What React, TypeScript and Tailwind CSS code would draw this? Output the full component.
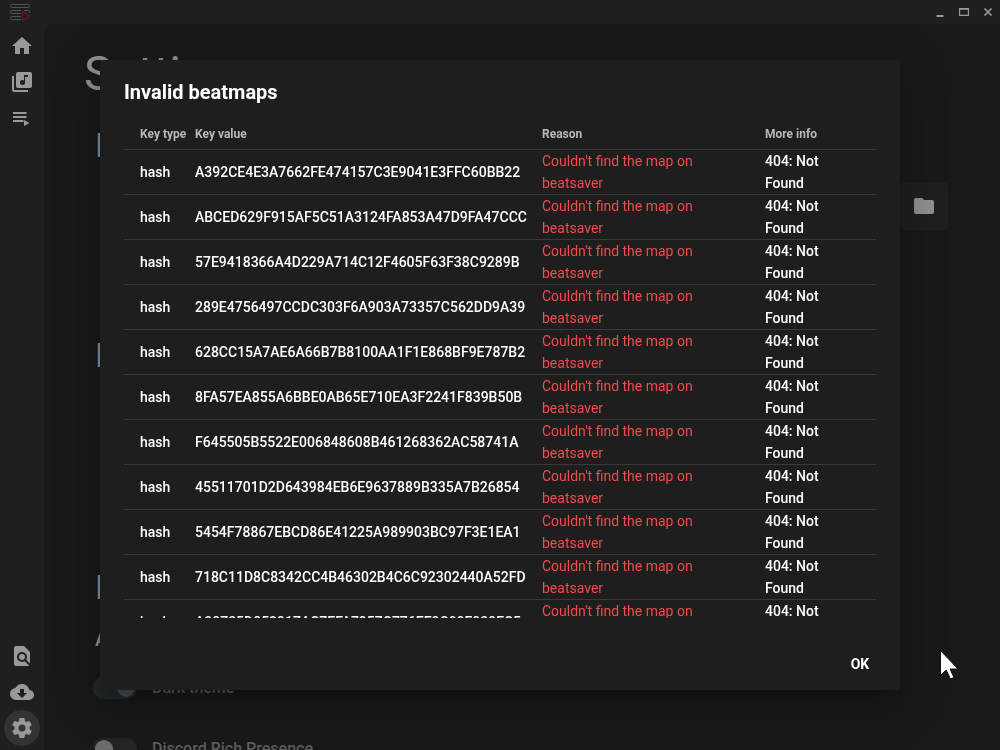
import type { ReactNode } from "react";

const COG =
  "M12,15.5A3.5,3.5 0 0,1 8.5,12A3.5,3.5 0 0,1 12,8.5A3.5,3.5 0 0,1 15.5,12A3.5,3.5 0 0,1 12,15.5M19.43,12.97C19.47,12.65 19.5,12.33 19.5,12C19.5,11.67 19.47,11.34 19.43,11L21.54,9.37C21.73,9.22 21.78,8.95 21.66,8.73L19.66,5.27C19.54,5.05 19.27,4.96 19.05,5.05L16.56,6.05C16.04,5.66 15.5,5.32 14.87,5.07L14.5,2.42C14.46,2.18 14.25,2 14,2H10C9.75,2 9.54,2.18 9.5,2.42L9.13,5.07C8.5,5.32 7.96,5.66 7.44,6.05L4.95,5.05C4.73,4.96 4.46,5.05 4.34,5.27L2.34,8.73C2.21,8.95 2.27,9.22 2.46,9.37L4.57,11C4.53,11.34 4.5,11.67 4.5,12C4.5,12.33 4.53,12.65 4.57,12.97L2.46,14.63C2.27,14.78 2.21,15.05 2.34,15.27L4.34,18.73C4.46,18.95 4.73,19.03 4.95,18.95L7.44,17.94C7.96,18.34 8.5,18.68 9.13,18.93L9.5,21.58C9.54,21.82 9.75,22 10,22H14C14.25,22 14.46,21.82 14.5,21.58L14.87,18.93C15.5,18.67 16.04,18.34 16.56,17.94L19.05,18.95C19.27,19.03 19.54,18.95 19.66,18.73L21.66,15.27C21.78,15.05 21.73,14.78 21.54,14.63L19.43,12.97Z";
const HOME = "M10,20V14H14V20H19V12H22L12,3L2,12H5V20H10Z";
const LIBRARY =
  "M4,6H2V20A2,2 0 0,0 4,22H18V20H4V6M20,2H8A2,2 0 0,0 6,4V16A2,2 0 0,0 8,18H20A2,2 0 0,0 22,16V4A2,2 0 0,0 20,2M18,7H15V12.5A2.5,2.5 0 0,1 12.5,15A2.5,2.5 0 0,1 10,12.5A2.5,2.5 0 0,1 12.5,10C13.07,10 13.58,10.19 14,10.5V5H18V7Z";
const PLAYLIST = "M3,6H16.5V8H3V6M3,10H16.5V12H3V10M3,14H13.5V16H3V14M14,14L19.5,17L14,20Z";
const FILE_FIND =
  "M9,13A3,3 0 0,0 12,16A3,3 0 0,0 15,13A3,3 0 0,0 12,10A3,3 0 0,0 9,13M20,19.59V8L14,2H6A2,2 0 0,0 4,4V20A2,2 0 0,0 6,22H18C18.45,22 18.85,21.85 19.19,21.6L14.76,17.17C13.96,17.69 13,18 12,18A5,5 0 0,1 7,13A5,5 0 0,1 12,8A5,5 0 0,1 17,13C17,14 16.69,14.96 16.17,15.75L20,19.59Z";
const CLOUD =
  "M17,13L12,18L7,13H10V9H14V13M19.35,10.03C18.67,6.59 15.64,4 12,4C9.11,4 6.6,5.64 5.35,8.03C2.34,8.36 0,10.9 0,14A6,6 0 0,0 6,20H19A5,5 0 0,0 24,15C24,12.36 21.95,10.22 19.35,10.03Z";
const FOLDER = "M10,4H4C2.89,4 2,4.89 2,6V18A2,2 0 0,0 4,20H20A2,2 0 0,0 22,18V8C22,6.89 21.1,6 20,6H12L10,4Z";

const KEYS = [
  "A392CE4E3A7662FE474157C3E9041E3FFC60BB22",
  "ABCED629F915AF5C51A3124FA853A47D9FA47CCC",
  "57E9418366A4D229A714C12F4605F63F38C9289B",
  "289E4756497CCDC303F6A903A73357C562DD9A39",
  "628CC15A7AE6A66B7B8100AA1F1E868BF9E787B2",
  "8FA57EA855A6BBE0AB65E710EA3F2241F839B50B",
  "F645505B5522E006848608B461268362AC58741A",
  "45511701D2D643984EB6E9637889B335A7B26854",
  "5454F78867EBCD86E41225A989903BC97F3E1EA1",
  "718C11D8C8342CC4B46302B4C6C92302440A52FD",
  "A20735D852917AC7EFA7957C776EE9C09F039FC5",
];

function Icon({ d }: { d: string }) {
  return (
    <svg viewBox="0 0 24 24" className="size-6 fill-current" aria-hidden="true">
      <path d={d} />
    </svg>
  );
}

function NavLink({ label, d, active = false }: { label: string; d: string; active?: boolean }) {
  return (
    <a
      href="#"
      aria-label={label}
      className={`flex size-9 items-center justify-center rounded-full ${active ? "bg-[#333333]" : ""}`}
    >
      <Icon d={d} />
    </a>
  );
}

function Heading({ children }: { children: ReactNode }) {
  return <h2 className="text-[34px] leading-10">{children}</h2>;
}

function Toggle({ label, on = false }: { label: string; on?: boolean }) {
  return (
    <label className="flex h-6 items-center gap-[15px] text-base font-medium text-[#5c5c5c]">
      <input type="checkbox" defaultChecked={on} className="peer sr-only" />
      <span
        className={`flex h-[22px] w-11 items-center rounded-full px-[2px] ${on ? "justify-end bg-[#23282a]" : "bg-[#242424]"}`}
      >
        <span className={`size-[18px] rounded-full ${on ? "bg-[#43505a]" : "bg-[#6c6c6c]"}`} />
      </span>
      {label}
    </label>
  );
}

function TitleBar() {
  return (
    <header className="flex h-6 shrink-0 items-center justify-between text-[#999999]">
      <svg viewBox="0 0 22 20" className="ml-[9px] h-5 w-[22px]" fill="none" aria-hidden="true">
        <g stroke="#555555">
          <rect x="1.5" y="2.5" width="19" height="3" rx="1" />
          <path d="M12 11.500H2.500a1 1 0 0 1-1-1v-1a1 1 0 0 1 1-1h9.500M15 8.500h4.500a1 1 0 0 1 1 1V11" />
          <path d="M12 14.500H2.500a1 1 0 0 0-1 1v1a1 1 0 0 0 1 1H12" />
        </g>
        <path d="M13.500 9.500L21 14L13.500 18.500Z" stroke="#7a1717" />
      </svg>
      <div className="flex">
        <button aria-label="Minimize" className="flex size-6 items-center justify-center">
          <svg viewBox="0 0 24 24" className="size-6" aria-hidden="true">
            <path d="M8.500 15h7v2h-7z" fill="currentColor" />
          </svg>
        </button>
        <button aria-label="Maximize" className="flex size-6 items-center justify-center">
          <svg viewBox="0 0 24 24" className="size-6" aria-hidden="true">
            <path fillRule="evenodd" d="M7 8h10v8H7zM8.200 9.800v5h7.600v-5z" fill="currentColor" />
          </svg>
        </button>
        <button aria-label="Close" className="flex size-6 items-center justify-center">
          <svg viewBox="0 0 24 24" className="size-6" aria-hidden="true">
            <path d="M8.500 8.500L15.500 15.500M15.500 8.500L8.500 15.500" stroke="currentColor" strokeWidth="1.700" />
          </svg>
        </button>
      </div>
    </header>
  );
}

function Settings() {
  return (
    <main className="min-w-0 flex-1 overflow-hidden rounded-tl-lg bg-[#191919] pl-10 pr-13 text-[#8f8f8f]">
      <h1 className="pt-[22px] text-5xl leading-[56px]">Settings</h1>
      <div className="pl-[11px]">
        <div className="pt-[23px]">
          <Heading>Folder</Heading>
        </div>
        <div className="mt-[17px] flex h-12 items-center justify-end">
          <button
            aria-label="Choose folder"
            className="flex size-12 items-center justify-center rounded bg-[#1f1f1f]"
          >
            <Icon d={FOLDER} />
          </button>
        </div>
        <div className="mt-[105px]">
          <Heading>Backup</Heading>
        </div>
        <div className="mt-48">
          <Heading>Extra</Heading>
        </div>
        <h3 className="mt-4 text-xl leading-8 font-medium">Appearance</h3>
      </div>
      <div className="mt-[21px] flex flex-col gap-[37px] pl-[9px]">
        <Toggle label="Dark theme" on />
        <Toggle label="Discord Rich Presence" />
      </div>
    </main>
  );
}

function InvalidBeatmaps() {
  return (
    <section
      role="dialog"
      aria-modal="true"
      aria-labelledby="dialog-title"
      className="flex w-4/5 flex-col rounded bg-[#1e1e1e] text-white shadow-[0_11px_15px_-7px_rgba(0,0,0,0.2),0_24px_38px_3px_rgba(0,0,0,0.14),0_9px_46px_8px_rgba(0,0,0,0.12)]"
    >
      <h2 id="dialog-title" className="px-6 pt-4 pb-[10px] text-xl leading-8 font-bold">
        Invalid beatmaps
      </h2>
      <div className="mx-6 h-[500px] overflow-hidden">
        <table className="w-full table-fixed border-separate border-spacing-0 text-left text-sm leading-[22px] [&_td]:border-b [&_td]:border-[#3a3a3a] [&_th]:border-b [&_th]:border-[#3a3a3a]">
          <colgroup>
            <col className="w-[71px]" />
            <col className="w-[347px]" />
            <col className="w-[223px]" />
            <col />
          </colgroup>
          <thead>
            <tr className="text-xs whitespace-nowrap text-[#b8b8b8]">
              <th className="h-8 pl-4 font-bold">Key type</th>
              <th className="font-bold">Key value</th>
              <th className="font-bold">Reason</th>
              <th className="font-bold">More info</th>
            </tr>
          </thead>
          <tbody>
            {KEYS.map((key) => (
              <tr key={key} className="font-medium">
                <td className="pl-4">hash</td>
                <td>{key}</td>
                <td className="pr-8 font-normal text-[#f04c4c]">Couldn't find the map on beatsaver</td>
                <td className="pr-8">404: Not Found</td>
              </tr>
            ))}
          </tbody>
        </table>
      </div>
      <div className="flex justify-end px-2 pt-7 pb-2">
        <button className="h-9 min-w-16 text-sm font-bold">OK</button>
      </div>
    </section>
  );
}

export default function App() {
  return (
    <div className="flex h-screen flex-col overflow-hidden bg-[#1f1f1f] font-['Roboto',sans-serif]">
      <TitleBar />
      <div className="flex min-h-0 flex-1">
        <nav className="flex w-11 shrink-0 flex-col items-center justify-between pt-1 pb-1 text-[#999999]">
          <div>
            <NavLink label="Home" d={HOME} />
            <NavLink label="Library" d={LIBRARY} />
            <NavLink label="Playlists" d={PLAYLIST} />
          </div>
          <div>
            <NavLink label="Scan" d={FILE_FIND} />
            <NavLink label="Downloads" d={CLOUD} />
            <NavLink label="Settings" d={COG} active />
          </div>
        </nav>
        <Settings />
      </div>
      <div className="fixed inset-0 flex items-center justify-center">
        <InvalidBeatmaps />
      </div>
      <svg viewBox="0 0 20 32" className="fixed top-[649px] left-[939px] h-8 w-5" aria-hidden="true">
        <path
          d="M1.500 1.500V26.500L7.200 21L11.500 30L15 28.500L11 20H19Z"
          fill="#ffffff"
          stroke="#101018"
          strokeWidth="1"
        />
      </svg>
    </div>
  );
}
